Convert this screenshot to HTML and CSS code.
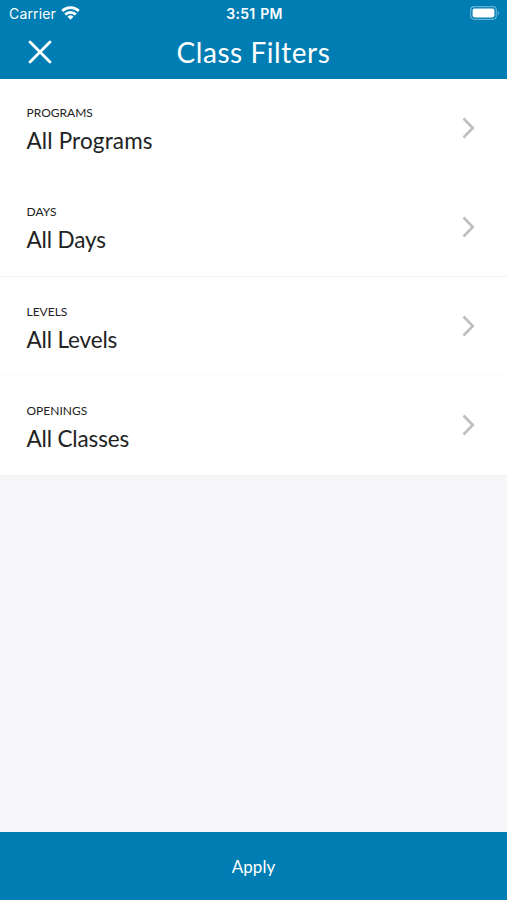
FILE: index.html
```html
<!DOCTYPE html>
<html lang="en">
<head>
  <meta charset="UTF-8">
  <title>Class Filters</title>
  <link rel="stylesheet" href="styles.css">
</head>
<body>

  <header class="header">
    <div class="status">
      <div class="carrier">
        <span>Carrier</span>
        <svg width="19" height="14" viewBox="0 0 19 14" fill="none" stroke="#fff" stroke-width="2.7">
          <path d="M1.2 5a12 12 0 0 1 16.6 0M4.2 8.5a7.6 7.6 0 0 1 10.6 0"/>
          <path d="M9.5 13.8l-3-3a4.3 4.3 0 0 1 6 0z" fill="#fff" stroke="none"/>
        </svg>
      </div>
      <span class="time">3:51 PM</span>
      <svg class="battery" width="30" height="14" viewBox="0 0 30 14">
        <rect x="0.7" y="0.7" width="25.6" height="12.6" rx="3.5" fill="none" stroke="#66b2d1" stroke-width="1.2"/>
        <rect x="2.6" y="2.6" width="21.8" height="8.8" rx="1.8" fill="#fff"/>
        <path d="M27.8 4.7q2.6 2.3 0 4.6z" fill="#66b2d1"/>
      </svg>
    </div>
    <div class="navbar">
      <svg class="close" width="24" height="24" viewBox="0 0 24 24" stroke="#fff" stroke-width="2.8" stroke-linecap="round">
        <path d="M2 2l20 20M22 2L2 22"/>
      </svg>
      <h1>Class Filters</h1>
    </div>
  </header>

  <main class="filters">
    <div class="row light">
      <div>
        <div class="label">PROGRAMS</div>
        <div class="value wide">All Programs</div>
      </div>
      <svg class="chevron" width="14" height="22" viewBox="0 0 14 22"><path d="M2.5 1.5l9.3 9.5-9.3 9.5"/></svg>
    </div>
    <div class="row">
      <div>
        <div class="label">DAYS</div>
        <div class="value">All Days</div>
      </div>
      <svg class="chevron" width="14" height="22" viewBox="0 0 14 22"><path d="M2.5 1.5l9.3 9.5-9.3 9.5"/></svg>
    </div>
    <div class="row light">
      <div>
        <div class="label">LEVELS</div>
        <div class="value">All Levels</div>
      </div>
      <svg class="chevron" width="14" height="22" viewBox="0 0 14 22"><path d="M2.5 1.5l9.3 9.5-9.3 9.5"/></svg>
    </div>
    <div class="row">
      <div>
        <div class="label">OPENINGS</div>
        <div class="value">All Classes</div>
      </div>
      <svg class="chevron" width="14" height="22" viewBox="0 0 14 22"><path d="M2.5 1.5l9.3 9.5-9.3 9.5"/></svg>
    </div>
  </main>

  <button class="apply">Apply</button>

</body>
</html>
```

FILE: styles.css
```css
* {
  box-sizing: border-box;
}
body {
  margin: 0;
  height: 900px;
  display: flex;
  flex-direction: column;
  background: #f6f6f9;
  color: #222;
  font-family: Lato, "Open Sans", sans-serif;
}
.header {
  height: 79px;
  background: #007eb3;
  color: #fff;
}
.status {
  height: 27px;
  padding: 0 7px 0 9px;
  display: grid;
  grid-template-columns: 1fr auto 1fr;
  align-items: center;
  font-family: Inter, sans-serif;
  font-size: 14px;
}
.carrier {
  display: flex;
  align-items: center;
  gap: 5px;
  letter-spacing: 0.15px;
}
.carrier svg {
  margin-top: -1px;
}
.time {
  font-weight: 600;
  letter-spacing: 0.25px;
  word-spacing: 1px;
}
.battery {
  justify-self: end;
  margin-top: -1px;
}
.navbar {
  height: 49px;
  padding: 0 28px;
  display: grid;
  grid-template-columns: 24px 1fr 24px;
  align-items: center;
}
h1 {
  margin: 0;
  text-align: center;
  font-size: 28px;
  font-weight: 400;
  letter-spacing: 0.55px;
}
.row {
  height: 99.25px;
  padding: 0 32px 0 26.5px;
  display: flex;
  align-items: center;
  justify-content: space-between;
  background: #fff;
  border-bottom: 1px solid #f2f2f3;
}
.row:first-child {
  height: 98.75px;
}
.row.light {
  border-color: #fbfbfb;
}
.label {
  margin-top: 6px;
  font-size: 12px;
  line-height: 16px;
}
.value {
  margin-top: 4px;
  font-size: 22.5px;
  line-height: 31px;
  letter-spacing: -0.15px;
}
.value.wide {
  letter-spacing: 0.15px;
}
.chevron {
  fill: none;
  stroke: #bebebe;
  stroke-width: 2.6;
}
.apply {
  height: 68px;
  margin-top: auto;
  padding: 0;
  border: 0;
  background: #007eb3;
  color: #fff;
  font-family: inherit;
  font-size: 17px;
}
```
